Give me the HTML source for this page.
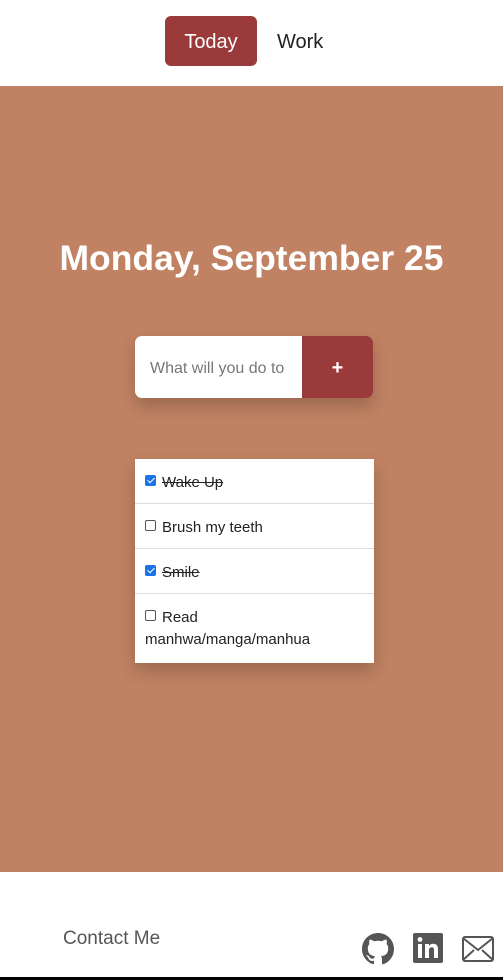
<!DOCTYPE html>
<html><head><style>
body{margin:0;width:503px;height:980px;font-family:"Liberation Sans",sans-serif;background:#fff;position:relative;overflow:hidden}
.nav{position:absolute;top:0;left:0;width:503px;height:86px}
.btn{position:absolute;left:165px;top:16px;width:92px;height:50px;background:#9b3a3a;border-radius:6px;color:#fff;font-size:20px;line-height:52px;text-align:center}
.work{position:absolute;left:277px;top:16px;line-height:52px;font-size:20px;color:#222}
.main{position:absolute;top:86px;left:0;width:503px;height:786px;background:#c08262}
h1{position:absolute;top:150px;left:0;width:503px;text-align:center;margin:0;color:#fff;font-size:35.5px;font-weight:bold;line-height:44px}
.ig{position:absolute;left:135px;top:250px;width:238px;height:62px;border-radius:7px;overflow:hidden;box-shadow:0 8px 16px rgba(0,0,0,.2);display:flex}
.ig .in{width:167px;background:#fff;color:#777;font-size:16px;line-height:66px;padding-left:15px;box-sizing:border-box;white-space:nowrap;overflow:hidden}
.ig .pl{flex:1;background:#9b3a3a;color:#fff;font-weight:bold;font-size:20px;text-align:center;line-height:64px}
.list{position:absolute;left:135px;top:373px;width:239px;background:#fff;box-shadow:0 8px 16px rgba(0,0,0,.2)}
.it{border-bottom:1px solid #ddd;padding:13px 10px 9px;font-size:15px;line-height:22px;color:#222}
.it:last-child{border-bottom:none;padding-bottom:12px}
.cb{display:inline-block;width:9px;height:9px;border:1px solid #555;border-radius:2px;margin-right:6px;vertical-align:1px}
.ck{background:#1a73e8;border-color:#1a73e8;position:relative}
.ck:after{content:"";position:absolute;left:3px;top:0;width:3px;height:6px;border:solid #fff;border-width:0 1.5px 1.5px 0;transform:rotate(45deg)}
s{text-decoration:line-through}
.contact{position:absolute;left:63px;top:928px;font-size:19px;color:#555}
.bar{position:absolute;left:0;top:977px;width:503px;height:3px;background:#000}
</style></head><body>
<div class="nav"><div class="btn">Today</div><div class="work">Work</div></div>
<div class="main">
<h1>Monday, September 25</h1>
<div class="ig"><div class="in">What will you do to</div><div class="pl">+</div></div>
<div class="list">
<div class="it"><span class="cb ck"></span><s>Wake Up</s></div>
<div class="it"><span class="cb"></span>Brush my teeth</div>
<div class="it"><span class="cb ck"></span><s>Smile</s></div>
<div class="it"><span class="cb"></span>Read manhwa/manga/manhua</div>
</div>
</div>
<div class="contact">Contact Me</div>
<svg style="position:absolute;left:362px;top:933px" width="32" height="32" viewBox="0 0 16 16"><path fill="#555" d="M8 0C3.58 0 0 3.58 0 8c0 3.54 2.290 6.530 5.470 7.590.4.07.55-.17.55-.38v-1.33c-2.23.48-2.7-1.07-2.7-1.07-.36-.92-.89-1.170-.89-1.170-.73-.5.06-.49.06-.49.8.06 1.23.83 1.23.83.71 1.23 1.87.87 2.33.66.07-.52.28-.87.5-1.07-1.78-.2-3.64-.89-3.64-3.95 0-.87.31-1.59.82-2.15-.08-.2-.36-1.02.08-2.12 0 0 .67-.21 2.2.82a7.6 7.6 0 014 0c1.53-1.04 2.2-.82 2.2-.82.44 1.1.16 1.92.08 2.12.51.56.82 1.27.82 2.15 0 3.07-1.87 3.75-3.65 3.95.29.25.54.73.54 1.48v2.2c0 .21.15.46.55.38A8 8 0 0016 8c0-4.42-3.58-8-8-8z"/></svg>
<svg style="position:absolute;left:413px;top:933px" width="30" height="30" viewBox="0 0 30 30"><rect width="30" height="30" rx="2" fill="#555"/><rect x="5" y="11" width="4" height="14" fill="#fff"/><circle cx="7" cy="6.5" r="2.4" fill="#fff"/><path fill="#fff" d="M12 11h4v2c1-1.6 2.5-2.3 4.3-2.3 3 0 4.7 1.8 4.7 5.3V25h-4v-8c0-1.8-.7-2.8-2.2-2.8S16 15.3 16 17v8h-4z"/></svg>
<svg style="position:absolute;left:462px;top:936px" width="32" height="26" viewBox="0 0 32 26"><rect x="1" y="1" width="30" height="24" rx="2" fill="none" stroke="#555" stroke-width="2"/><path d="M1 2l15 12L31 2M1 24l11-10M31 24L20 14" fill="none" stroke="#555" stroke-width="2"/></svg>
<div class="bar"></div>
</body></html>
